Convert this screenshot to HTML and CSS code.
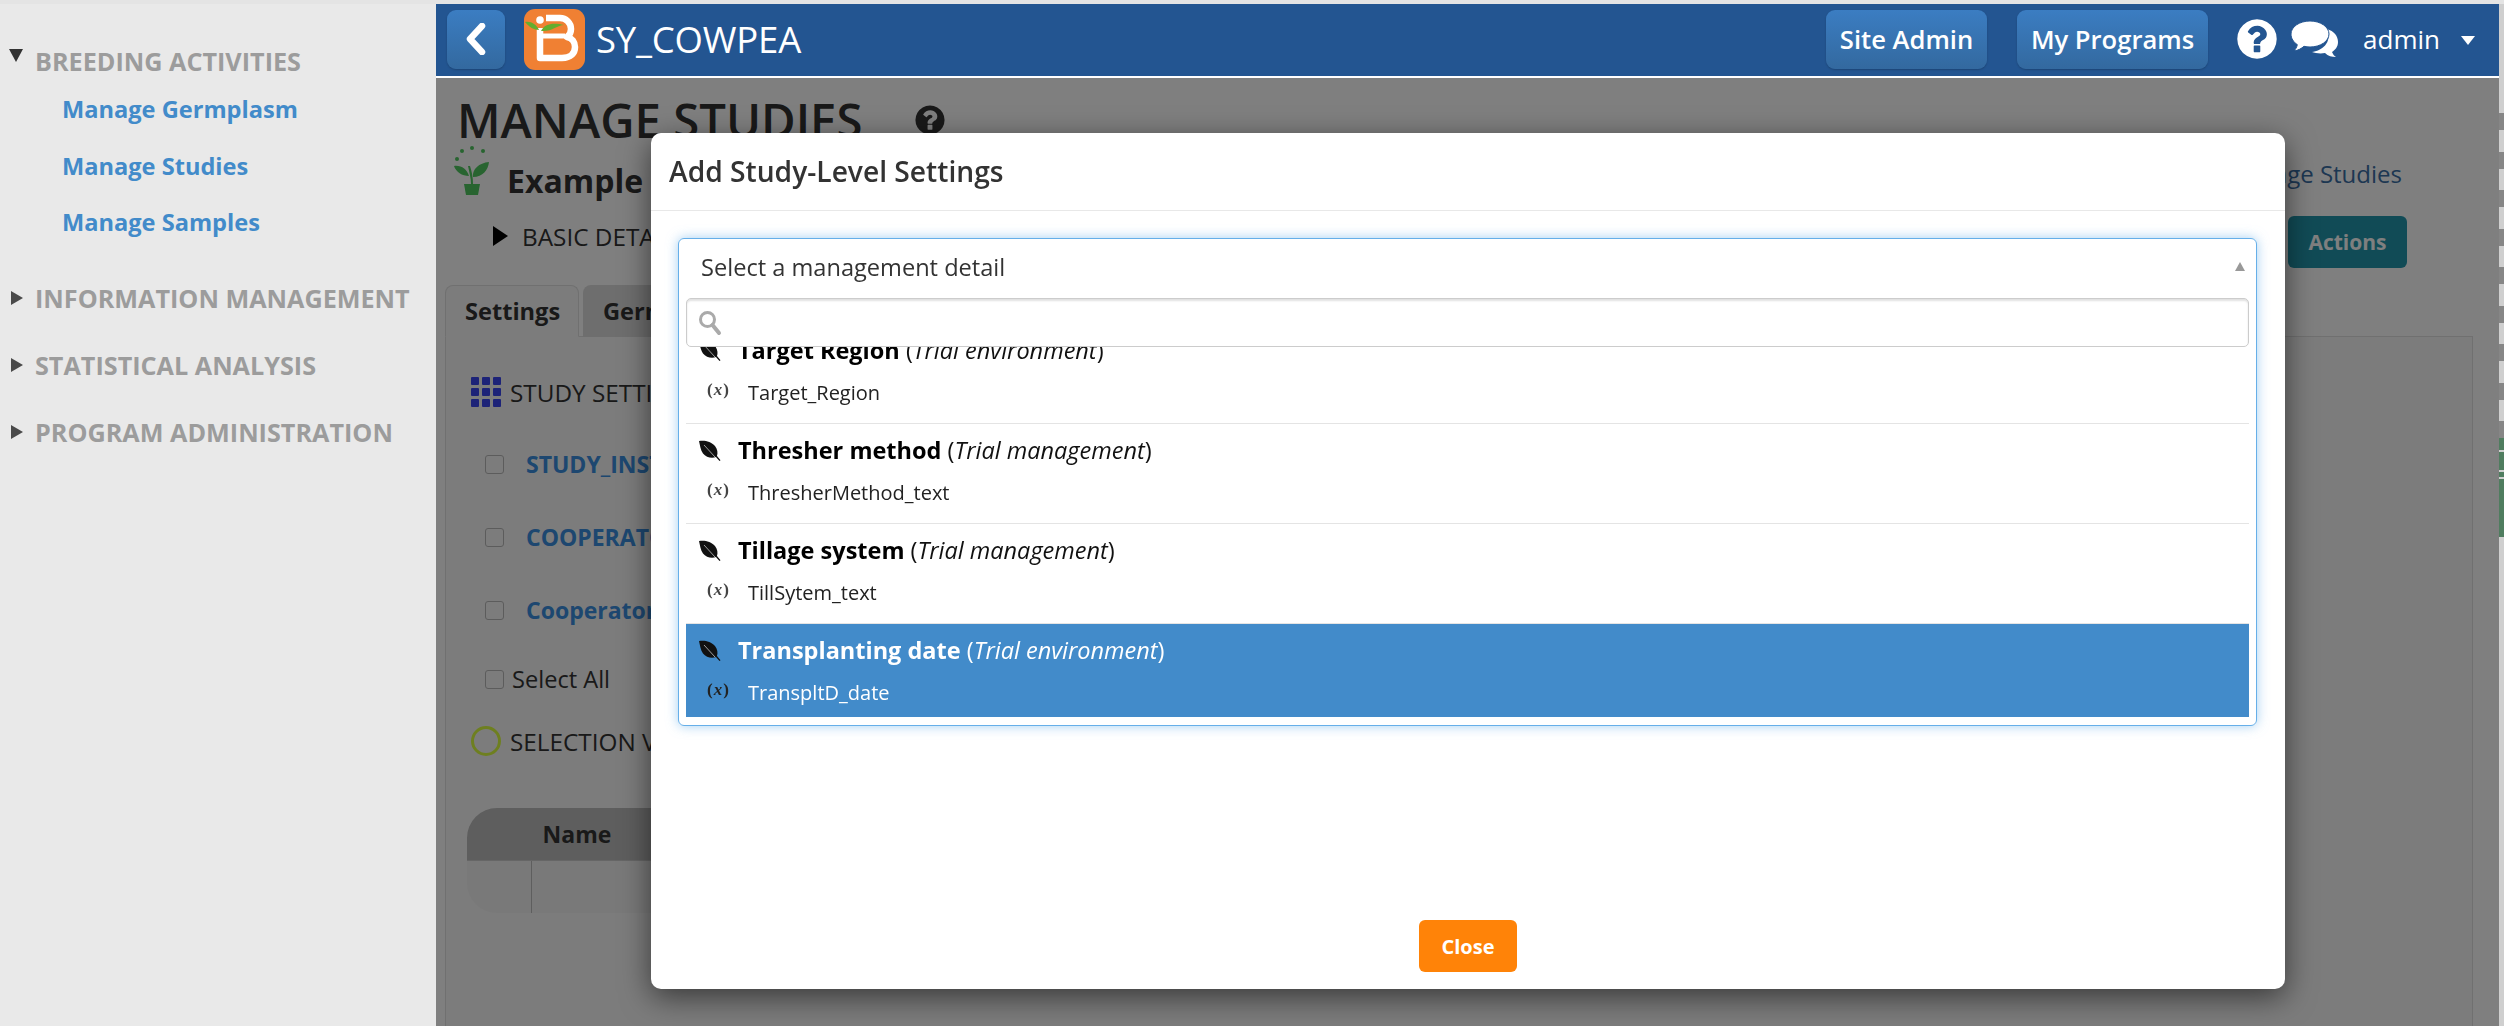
FILE: index.html
```html
<!DOCTYPE html>
<html lang="en">
<head>
<meta charset="utf-8">
<title>Manage Studies</title>
<link rel="stylesheet" href="styles.css">
</head>
<body>
<svg class="defs" width="0" height="0" aria-hidden="true">
  <symbol id="leaf" viewBox="0 0 23 21">
    <path d="M1 1C6 0 13 1 17 6c2.500 3 3 7 2 10l3.500 4.300-1 .7-3.600-4C14 18.500 8 17.500 5 13.500 2.500 10 2 5 1 1z" fill="currentColor"/>
    <path d="M6 5l11 12" stroke="#fff" stroke-width=".8" fill="none" opacity=".75"/>
  </symbol>
</svg>
<div class="app">
  <aside class="sidebar">
    <div class="side-head"><span class="tri-down"></span>BREEDING ACTIVITIES</div>
    <nav class="side-links">
      <a class="side-link">Manage Germplasm</a>
      <a class="side-link">Manage Studies</a>
      <a class="side-link">Manage Samples</a>
    </nav>
    <div class="side-group">
      <div class="side-head"><span class="tri-right"></span>INFORMATION MANAGEMENT</div>
      <div class="side-head"><span class="tri-right"></span>STATISTICAL ANALYSIS</div>
      <div class="side-head"><span class="tri-right"></span>PROGRAM ADMINISTRATION</div>
    </div>
  </aside>
  <div class="main">
    <header class="navbar">
      <button class="nav-btn back-btn" aria-label="Back">
        <svg width="20" height="32" viewBox="0 0 20 32"><path d="M16 3L4 16l12 13" fill="none" stroke="#fff" stroke-width="6.500" stroke-linecap="round" stroke-linejoin="round"/></svg>
      </button>
      <svg class="logo" width="61" height="61" viewBox="0 0 61 61">
        <rect width="61" height="61" rx="11" fill="#f08033"/>
        <circle cx="16" cy="11" r="3.800" fill="#fff"/>
        <path d="M16 19v30h22c9 0 13-5 13-11 0-5-3-9-8-10 3-2 4-5 4-8 0-6-5-11-11-11H22" fill="none" stroke="#fff" stroke-width="6.500" stroke-linejoin="round"/>
        <path d="M19 27h22" stroke="#fff" stroke-width="5"/>
        <path d="M1 13c6-1 11 2 14 8-5 0-10-3-14-8z" fill="#63ad2e"/>
        <path d="M17 22c3-7 12-9 23-6-7 0-12 7-23 6z" fill="#63ad2e"/>
      </svg>
      <span class="brand">SY_COWPEA</span>
      <div class="nav-right">
        <button class="nav-btn text-btn site-btn">Site Admin</button>
        <button class="nav-btn text-btn prog-btn">My Programs</button>
        <svg class="help" width="46" height="46" viewBox="0 0 1792 1792"><path fill="#fff" d="M1024 1376v-192q0-14-9-23t-23-9h-192q-14 0-23 9t-9 23v192q0 14 9 23t23 9h192q14 0 23-9t9-23zm256-672q0-88-55.500-163t-138.500-116-170-41q-243 0-371 213-15 24 8 42l132 100q7 6 19 6 16 0 25-12 53-68 86-92 34-24 86-24 48 0 85.500 26t37.500 59q0 38-20 61t-68 45q-63 28-115.500 86.500t-52.500 125.500v36q0 14 9 23t23 9h192q14 0 23-9t9-23q0-19 21.500-49.500t54.500-49.500q32-18 49-28.500t46-35 44.500-48 28-60.500 12.500-81zm384 192q0 209-103 385.500t-279.500 279.500-385.500 103-385.500-103-279.500-279.500-103-385.500 103-385.500 279.500-279.500 385.500-103 385.500 103 279.500 279.500 103 385.500z"/></svg>
        <svg class="chat" width="48" height="37" viewBox="0 0 48 37">
          <path d="M36 8c7 2 11 7 11 13 0 5-3 8-6 10 1 2 2 4 4 5-4 0-8-1-11-4-5 1-10 0-13-1 9-1 21-9 15-23z" fill="#fff"/>
          <path d="M19 0c10.500 0 19 5.800 19 13s-8.500 13-19 13c-2 0-4-.2-6-.700C10.500 27.500 7 29.500 3 30c1.500-1.700 2.800-3.700 3.300-6.400C2.500 21.200 0 17.300 0 13 0 5.800 8.500 0 19 0z" fill="#fff" stroke="#235591" stroke-width="1"/>
        </svg>
        <span class="user">admin</span>
        <span class="caret"></span>
      </div>
    </header>
    <div class="page">
      <div class="title-row">
        <h1 class="page-title">MANAGE STUDIES</h1>
        <svg class="title-help" width="34" height="34" viewBox="0 0 1792 1792"><path fill="#333" d="M1024 1376v-192q0-14-9-23t-23-9h-192q-14 0-23 9t-9 23v192q0 14 9 23t23 9h192q14 0 23-9t9-23zm256-672q0-88-55.500-163t-138.500-116-170-41q-243 0-371 213-15 24 8 42l132 100q7 6 19 6 16 0 25-12 53-68 86-92 34-24 86-24 48 0 85.500 26t37.500 59q0 38-20 61t-68 45q-63 28-115.500 86.500t-52.500 125.500v36q0 14 9 23t23 9h192q14 0 23-9t9-23q0-19 21.500-49.500t54.500-49.500q32-18 49-28.500t46-35 44.500-48 28-60.500 12.500-81zm384 192q0 209-103 385.500t-279.500 279.500-385.500 103-385.500-103-279.500-279.500-103-385.500 103-385.500 279.500-279.500 385.500-103 385.500 103 279.500 279.500 103 385.500z"/></svg>
      </div>
      <div class="study-row">
        <div class="study-name">
          <svg width="36" height="49" viewBox="0 0 36 49">
            <g fill="#50c860">
              <path d="M10 38h16l-2 11H12z"/>
              <path d="M17 38c0-6-2-13-3-18h2c2 6 3 12 3 18z"/>
              <path d="M19 31c-1-8 6-14 16-15-1 8-6 15-16 15z"/>
              <path d="M15 30C8 30 2 26 0 20c7-1 13 3 15 10z"/>
              <circle cx="18" cy="2" r="2"/><circle cx="8" cy="5" r="2"/><circle cx="29" cy="5" r="2"/><circle cx="3" cy="13" r="2"/>
            </g>
          </svg>
          <span class="study-text">Example Study</span>
        </div>
        <span class="crumb">Manage Studies</span>
      </div>
      <div class="basic-row">
        <div class="basic-label"><span class="tri-big"></span>BASIC DETAILS</div>
        <button class="actions">Actions</button>
      </div>
      <div class="tabs">
        <span class="tab active">Settings</span>
        <span class="tab">Germplasm</span>
      </div>
      <section class="panel">
        <div class="sec-title">
          <svg width="30" height="30" viewBox="0 0 30 30" fill="#3a46f0"><rect width="8" height="8" rx="1"/><rect x="11" width="8" height="8" rx="1"/><rect x="22" width="8" height="8" rx="1"/><rect y="11" width="8" height="8" rx="1"/><rect x="11" y="11" width="8" height="8" rx="1"/><rect x="22" y="11" width="8" height="8" rx="1"/><rect y="22" width="8" height="8" rx="1"/><rect x="11" y="22" width="8" height="8" rx="1"/><rect x="22" y="22" width="8" height="8" rx="1"/></svg>
          STUDY SETTINGS
        </div>
        <div class="check-list">
          <div class="check-row"><span class="check"></span><a class="var-link">STUDY_INSTITUTE</a></div>
          <div class="check-row"><span class="check"></span><a class="var-link">COOPERATOR</a></div>
          <div class="check-row"><span class="check"></span><a class="var-link">Cooperator_ID</a></div>
        </div>
        <div class="select-all"><span class="check"></span>Select All</div>
        <div class="sec-title selection"><span class="ring"></span>SELECTION VARIATES</div>
        <div class="table">
          <div class="thead"><span class="th-num"></span><span class="th-name">Name</span></div>
          <div class="tbody"><span class="td-num"></span></div>
        </div>
      </section>
      <div class="backdrop"></div>
    </div>
  </div>
  <div class="strip">
    <i class="mark"></i><i class="mark"></i><i class="mark"></i><i class="mark"></i><i class="mark"></i><i class="mark"></i><i class="mark"></i><i class="mark"></i><i class="mark"></i>
    <i class="green g1"></i><i class="green g2"></i><i class="green g3"></i><i class="green g4"></i>
  </div>
</div>

<div class="modal">
  <div class="modal-head">Add Study-Level Settings</div>
  <div class="modal-body">
    <div class="select2">
      <div class="select-top">
        <span>Select a management detail</span>
        <span class="tri-up"></span>
      </div>
      <div class="search">
        <svg width="24" height="26" viewBox="0 0 24 26"><circle cx="9.500" cy="9.500" r="7" fill="none" stroke="#aaa" stroke-width="3"/><path d="M14.500 15l6.500 8" stroke="#aaa" stroke-width="4" stroke-linecap="round"/></svg>
      </div>
      <ul class="results">
        <li class="result clipped">
          <div class="res-title"><svg class="leaf"><use href="#leaf"/></svg><span><b>Target Region</b> (<em>Trial environment</em>)</span></div>
          <div class="res-sub"><span class="var-x">(<i>x</i>)</span>Target_Region</div>
        </li>
        <li class="result">
          <div class="res-title"><svg class="leaf"><use href="#leaf"/></svg><span><b>Thresher method</b> (<em>Trial management</em>)</span></div>
          <div class="res-sub"><span class="var-x">(<i>x</i>)</span>ThresherMethod_text</div>
        </li>
        <li class="result">
          <div class="res-title"><svg class="leaf"><use href="#leaf"/></svg><span><b>Tillage system</b> (<em>Trial management</em>)</span></div>
          <div class="res-sub"><span class="var-x">(<i>x</i>)</span>TillSytem_text</div>
        </li>
        <li class="result selected">
          <div class="res-title"><svg class="leaf"><use href="#leaf"/></svg><span><b>Transplanting date</b> (<em>Trial environment</em>)</span></div>
          <div class="res-sub"><span class="var-x">(<i>x</i>)</span>TranspltD_date</div>
        </li>
      </ul>
    </div>
  </div>
  <div class="modal-foot"><button class="close-btn">Close</button></div>
</div>
</body>
</html>
```
FILE: styles.css
```css
* { box-sizing: border-box; }
html { margin: 0; height: 1026px; overflow: hidden; }
body {
  margin: 0;
  height: 1026px;
  overflow: hidden;
  background: #e9e9e9;
  font-family: "Open Sans", "Liberation Sans", sans-serif;
  color: #333;
}
.defs { position: absolute; }
ul { list-style: none; margin: 0; padding: 0; }
button { font-family: inherit; border: 0; padding: 0; }

.app { display: flex; height: 1026px; border-top: 4px solid #e4e4e4; }

/* sidebar */
.sidebar { width: 436px; flex: none; padding-top: 37px; background: #e9e9e9; }
.side-head {
  position: relative;
  height: 40px;
  line-height: 40px;
  padding-left: 35px;
  font-size: 25.200px;
  font-weight: 700;
  color: #9c9c9c;
  white-space: nowrap;
}
.tri-down, .tri-right { position: absolute; width: 0; height: 0; }
.tri-down { left: 9px; top: 8px; border-left: 7px solid transparent; border-right: 7px solid transparent; border-top: 13px solid #333; }
.tri-right { left: 11px; top: 13px; border-top: 7px solid transparent; border-bottom: 7px solid transparent; border-left: 12px solid #4a4a4a; }
.side-links { display: flex; flex-direction: column; gap: 16.500px; padding: 8px 0 36px 62px; }
.side-link { height: 40px; line-height: 40px; font-size: 23.600px; font-weight: 700; color: #428bca; }
.side-group { display: flex; flex-direction: column; gap: 27px; }

/* main column */
.main { width: 2063px; flex: none; display: flex; flex-direction: column; }
.navbar {
  display: flex;
  align-items: center;
  height: 74px;
  padding: 0 0 2px 11px;
  flex: none;
  background: #235591;
  border-bottom: 2px solid #fff;
}
.nav-btn {
  height: 59px;
  border-radius: 9px;
  background: linear-gradient(#3b7dc2, #33699f);
  box-shadow: 0 1px 2px rgba(0, 0, 0, .2);
  color: #fff;
}
.back-btn { width: 58px; display: flex; align-items: center; justify-content: center; }
.logo { margin-left: 19px; }
.brand { margin-left: 11px; font-size: 36.500px; color: #fff; letter-spacing: -.2px; }
.nav-right { display: flex; align-items: center; margin-left: auto; }
.text-btn { font-size: 25.600px; font-weight: 600; }
.site-btn { width: 161px; }
.prog-btn { width: 191px; margin-left: 30px; }
.help { margin-left: 26px; }
.chat { margin-left: 11px; }
.user { margin-left: 24px; font-size: 26px; color: #fff; }
.caret { margin: 3px 24px 0 21px; border-left: 7px solid transparent; border-right: 7px solid transparent; border-top: 9px solid #fff; }

/* page under the backdrop */
.page { position: relative; isolation: isolate; flex: 1; min-height: 0; background: #fff; padding-left: 9px; overflow: hidden; }
.backdrop { position: absolute; inset: 0; z-index: 2; background: rgba(0, 0, 0, .5); }
.title-row { display: flex; align-items: center; height: 44px; margin-top: 20px; padding-left: 12px; }
.page-title { margin: 0; font-size: 47.300px; line-height: 44px; font-weight: 600; color: #333; white-space: nowrap; }
.title-help { margin-left: 50px; }
.study-row { display: flex; justify-content: space-between; align-items: center; height: 49px; margin-top: 4px; padding: 0 97px 0 9px; }
.study-name { display: flex; align-items: center; gap: 17px; font-size: 32px; font-weight: 700; color: #333; }
.study-text { margin-top: 20px; }
.crumb { margin-top: 5px; font-size: 24px; color: #3a6ea5; }
.basic-row { display: flex; justify-content: space-between; align-items: center; height: 52px; margin-top: 21px; padding: 0 92px 0 48px; }
.basic-label { display: flex; align-items: center; gap: 14px; margin-bottom: 12px; font-size: 24.300px; color: #333; }
.tri-big { border-top: 10px solid transparent; border-bottom: 10px solid transparent; border-left: 15px solid #000; }
.actions { width: 119px; height: 52px; border-radius: 6px; background: #2297ad; color: #fff; font-size: 21px; font-weight: 700; }
.tabs { display: flex; gap: 4px; height: 52px; margin-top: 17px; position: relative; z-index: 1; }
.tab { display: flex; align-items: center; padding: 0 20px; height: 52px; font-size: 23.600px; font-weight: 700; color: #333; background: #dcdcdc; border-radius: 8px 8px 0 0; }
.tab.active { width: 134px; padding: 0 19px; background: #f8f8f8; border: 1px solid #e0e0e0; border-bottom-color: #f8f8f8; }
.panel { width: 2028px; height: 700px; margin-top: -1px; padding: 40px 0 0 25px; background: #f8f8f8; border: 1px solid #e0e0e0; }
.sec-title { display: flex; align-items: center; gap: 9px; height: 30px; font-size: 24.300px; color: #333; white-space: nowrap; }
.check-list { display: flex; flex-direction: column; gap: 33px; margin-top: 37px; padding-left: 14px; }
.check-row { display: flex; align-items: center; gap: 22px; height: 40px; }
.check { flex: none; width: 19px; height: 19px; border: 1.500px solid #b8b8b8; border-radius: 3px; }
.var-link { font-size: 23px; font-weight: 700; color: #3a8fe0; }
.select-all { display: flex; align-items: center; gap: 8px; height: 40px; margin-top: 29px; padding-left: 14px; font-size: 23.600px; }
.selection { margin-top: 27px; }
.ring { flex: none; width: 30px; height: 30px; border: 3px solid #dcff40; border-radius: 50%; }
.table { width: 1000px; margin-top: 52px; margin-left: -4px; border-radius: 30px 0 0 30px; overflow: hidden; }
.thead { display: flex; align-items: center; height: 52px; background: #bcbcbc; }
.th-num { width: 64px; }
.th-name { width: 92px; text-align: center; font-size: 23px; font-weight: 700; color: #333; }
.tbody { height: 53px; background: #f3f3f3; border-top: 1px solid #ccc; }
.td-num { display: block; width: 65px; height: 100%; border-right: 1px solid #bdbdbd; }

/* right strip */
.strip { flex: 1; display: flex; flex-direction: column; background: #cfcfcf; padding-top: 109px; }
.mark { display: block; height: 17px; margin-bottom: 21.500px; background: #666; opacity: .7; }
.green { display: block; background: #4f7d5f; margin-bottom: 2px; }
.mark:nth-child(9) { margin-bottom: 0; }
.g1 { height: 12px; }
.g2 { height: 18px; }
.g3 { height: 5px; }
.g4 { height: 58px; }

/* modal */
.modal {
  position: fixed;
  z-index: 10;
  left: 651px;
  top: 133px;
  width: 1634px;
  height: 856px;
  display: flex;
  flex-direction: column;
  background: #fff;
  border-radius: 10px;
  box-shadow: 0 8px 30px rgba(0, 0, 0, .55);
}
.modal-head {
  height: 78px;
  flex: none;
  padding-left: 18px;
  line-height: 77px;
  font-size: 28.200px;
  font-weight: 600;
  color: #333;
  border-bottom: 1px solid #e8e8e8;
}
.modal-body { padding: 27px 28px 0 27px; }
.select2 {
  height: 488px;
  padding: 0 7px;
  border: 1px solid #66afe9;
  border-radius: 6px;
  box-shadow: 0 0 12px rgba(102, 175, 233, .6);
}
.select-top { display: flex; justify-content: space-between; align-items: center; height: 59px; padding: 0 4px 4px 15px; font-size: 23.600px; color: #333; }
.tri-up { border-left: 5.500px solid transparent; border-right: 5.500px solid transparent; border-bottom: 9px solid #999; }
.search {
  display: flex;
  align-items: center;
  height: 49px;
  padding-left: 11px;
  border: 1px solid #ccc;
  border-radius: 5px;
  box-shadow: inset 0 2px 2px rgba(0, 0, 0, .12);
  position: relative;
  z-index: 1;
  background: #fff;
}
.results { height: 371px; overflow: hidden; }
.result { height: 100px; padding: 10px 0 0 12px; border-bottom: 1px solid #e4e4e4; color: #000; }
.clipped { margin-top: -23px; }
.res-title { display: flex; align-items: center; height: 32px; font-size: 23.500px; white-space: pre; color: #111; }
.res-title b { font-weight: 700; color: #000; }
.leaf { width: 23px; height: 21px; margin-right: 17px; color: #111; flex: none; }
.res-sub { display: flex; align-items: center; height: 28px; margin-top: 12px; font-size: 20px; color: #222; }
.var-x { width: 50px; padding-left: 9px; font-family: "Liberation Serif", serif; font-size: 17px; font-weight: 700; letter-spacing: 1px; color: #444; margin-top: -4px; flex: none; }
.selected { background: #428bca; border-bottom: 0; height: 93px; }
.selected .res-title, .selected .res-title b, .selected .res-sub { color: #fff; }
.selected .var-x { color: #222; }
.modal-foot { margin-top: auto; display: flex; justify-content: center; padding-bottom: 17px; }
.close-btn { width: 98px; height: 52px; border-radius: 6px; background: #ff8308; color: #fff; font-size: 20px; font-weight: 700; }
```
